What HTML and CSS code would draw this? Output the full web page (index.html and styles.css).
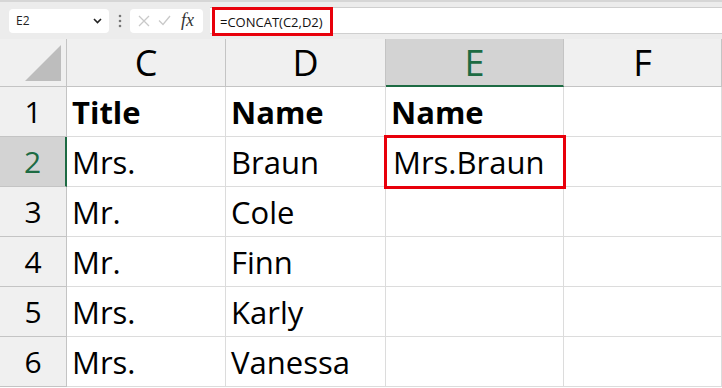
FILE: index.html
```html
<!DOCTYPE html>
<html>
<head>
  <title>CONCAT</title>
  <link rel="stylesheet" href="styles.css">
</head>
<body>
  <div class="toolbar">
    <div class="name-box">
      <span>E2</span>
      <svg class="chevron" width="9" height="6" viewBox="0 0 9 6"><path d="M1 1l3.5 3.5L8 1" fill="none" stroke="#222" stroke-width="1.6"/></svg>
    </div>
    <div class="dots">
      <svg width="4" height="14" viewBox="0 0 4 14"><circle cx="2" cy="2" r="1.3" fill="#777"/><circle cx="2" cy="7" r="1.3" fill="#777"/><circle cx="2" cy="12" r="1.3" fill="#777"/></svg>
    </div>
    <div class="fn-box">
      <svg width="12" height="12" viewBox="0 0 12 12"><path d="M1 1l10 10M11 1L1 11" stroke="#c9c9c9" stroke-width="1.3"/></svg>
      <svg width="13" height="11" viewBox="0 0 13 11"><path d="M1 5.5l4 4L12 1" fill="none" stroke="#c9c9c9" stroke-width="1.3"/></svg>
      <span class="fx">fx</span>
    </div>
    <div class="formula-bar">
      <span class="formula">=CONCAT(C2,D2)</span>
    </div>
  </div>

  <div class="sheet">
    <div class="corner">
      <svg width="40" height="40" viewBox="0 0 40 40"><path d="M38 2V38H2Z" fill="#bdbdbd"/></svg>
    </div>
    <div class="col-head">C</div>
    <div class="col-head">D</div>
    <div class="col-head selected">E</div>
    <div class="col-head">F</div>

    <div class="row-head">1</div>
    <div class="cell bold">Title</div>
    <div class="cell bold">Name</div>
    <div class="cell bold">Name</div>
    <div class="cell"></div>

    <div class="row-head selected">2</div>
    <div class="cell">Mrs.</div>
    <div class="cell">Braun</div>
    <div class="cell active">Mrs.Braun</div>
    <div class="cell"></div>

    <div class="row-head">3</div>
    <div class="cell">Mr.</div>
    <div class="cell">Cole</div>
    <div class="cell"></div>
    <div class="cell"></div>

    <div class="row-head">4</div>
    <div class="cell">Mr.</div>
    <div class="cell">Finn</div>
    <div class="cell"></div>
    <div class="cell"></div>

    <div class="row-head">5</div>
    <div class="cell">Mrs.</div>
    <div class="cell">Karly</div>
    <div class="cell"></div>
    <div class="cell"></div>

    <div class="row-head">6</div>
    <div class="cell">Mrs.</div>
    <div class="cell">Vanessa</div>
    <div class="cell"></div>
    <div class="cell"></div>
  </div>
</body>
</html>
```

FILE: styles.css
```css
:root {
  --toolbar: #ececec;
  --head: #f0f0f0;
  --head-selected: #d3d3d3;
  --green: #1d6b43;
  --grid: #dcdcdc;
  --head-line: #c4c4c4;
  --red: #e8000b;
}

* {
  box-sizing: border-box;
}

body {
  margin: 0;
  width: 722px;
  height: 388px;
  overflow: hidden;
  background: #fff;
  font-family: 'Open Sans', 'Noto Sans', sans-serif;
  color: #000;
}

.toolbar {
  height: 39px;
  background: var(--toolbar);
  border-top: 2px solid #d6d6d6;
  display: flex;
  align-items: center;
  padding-left: 9px;
}

.name-box {
  width: 100px;
  height: 24px;
  background: #fff;
  border-radius: 4px;
  display: flex;
  align-items: center;
  justify-content: space-between;
  padding: 0 7px 0 7px;
  font-size: 12px;
  color: #222;
}

.dots {
  width: 21px;
  display: flex;
  justify-content: center;
}

.fn-box {
  width: 73px;
  height: 24px;
  background: #fff;
  border-radius: 4px;
  display: flex;
  align-items: center;
  gap: 8px;
  padding-left: 8px;
}

.fx {
  font-family: 'Liberation Serif', serif;
  font-style: italic;
  font-size: 18px;
  color: #333;
  margin-left: 2px;
}

.formula-bar {
  flex: 1;
  height: 27px;
  margin-left: 7px;
  background: #fff;
  border-top: 1px solid #cfcfcf;
  border-bottom: 1px solid #cfcfcf;
  display: flex;
  align-items: center;
}

.formula {
  margin-left: 2px;
  margin-top: 2px;
  height: 29px;
  width: 121px;
  border: 3px solid var(--red);
  display: flex;
  align-items: center;
  padding-left: 5px;
  font-size: 13px;
  color: #111;
  white-space: nowrap;
}

.sheet {
  display: grid;
  grid-template-columns: 67px 159px 160px 178px 158px;
  grid-template-rows: 48px repeat(6, 50px);
}

.corner {
  background: var(--head);
  border-right: 1px solid var(--head-line);
  border-bottom: 1px solid var(--head-line);
  display: flex;
  align-items: flex-end;
  justify-content: flex-end;
  padding: 0 3px 3px 0;
}

.col-head {
  background: var(--head);
  border-right: 1px solid var(--head-line);
  border-bottom: 1px solid var(--head-line);
  display: flex;
  align-items: center;
  justify-content: center;
  font-size: 36px;
}

.col-head.selected {
  background: var(--head-selected);
  color: var(--green);
  border-bottom: 2px solid var(--green);
}

.row-head {
  background: var(--head);
  border-right: 1px solid var(--head-line);
  border-bottom: 1px solid var(--head-line);
  display: flex;
  align-items: center;
  justify-content: center;
  font-size: 30px;
}

.row-head.selected {
  background: var(--head-selected);
  color: var(--green);
  border-right: 2px solid var(--green);
}

.cell {
  border-right: 1px solid var(--grid);
  border-bottom: 1px solid var(--grid);
  display: flex;
  align-items: center;
  padding-left: 5px;
  font-size: 31px;
  white-space: nowrap;
}

.cell.bold {
  font-weight: 700;
}

.cell.active {
  position: relative;
  z-index: 1;
  outline: 3px solid var(--red);
  outline-offset: -1px;
  padding-left: 7px;
}
```
